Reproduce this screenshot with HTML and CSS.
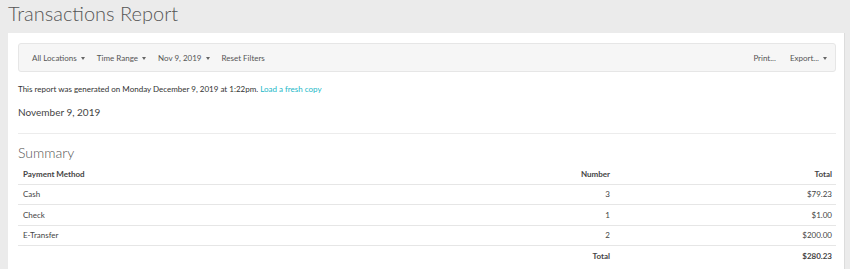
FILE: index.html
```html
<!DOCTYPE html>
<html>
<head>
<meta charset="utf-8">
<link rel="stylesheet" href="styles.css">
</head>
<body>
<h1 class="title">Transactions Report</h1>
<div class="panel">
  <div class="toolbar">
    <div class="group">
      <span class="item">All Locations <span class="caret"></span></span>
      <span class="item">Time Range <span class="caret"></span></span>
      <span class="item">Nov 9, 2019 <span class="caret"></span></span>
      <span class="item">Reset Filters</span>
    </div>
    <div class="group right">
      <span class="item">Print...</span>
      <span class="item">Export... <span class="caret"></span></span>
    </div>
  </div>
  <p class="generated">This report was generated on Monday December 9, 2019 at 1:22pm. <a class="link">Load a fresh copy</a></p>
  <h2 class="date">November 9, 2019</h2>
  <h3 class="summary">Summary</h3>
  <table class="tbl">
    <thead>
      <tr><th class="left">Payment Method</th><th class="num">Number</th><th class="num col3">Total</th></tr>
    </thead>
    <tbody>
      <tr><td>Cash</td><td class="num">3</td><td class="num">$79.23</td></tr>
      <tr><td>Check</td><td class="num">1</td><td class="num">$1.00</td></tr>
      <tr><td>E-Transfer</td><td class="num">2</td><td class="num">$200.00</td></tr>
    </tbody>
    <tfoot>
      <tr><td></td><td class="num bold">Total</td><td class="num bold">$280.23</td></tr>
    </tfoot>
  </table>
</div>
</body>
</html>
```

FILE: styles.css
```css
html, body {
  margin: 0;
  padding: 0;
  background: #ebebeb;
  font-family: Lato, "Liberation Sans", sans-serif;
  color: #444;
}
.title {
  margin: 0;
  padding: 0 0 0 8px;
  height: 33px;
  font-size: 20px;
  font-weight: 300;
  color: #555;
  line-height: 26px;
}
.panel {
  background: #fff;
  margin: 0 5px 0 8px;
  padding: 10px 8px 20px 10px;
  border-right: 1px solid #dcdcdc;
  min-height: 200px;
}
.toolbar {
  display: flex;
  justify-content: space-between;
  align-items: center;
  height: 27px;
  background: #f6f6f6;
  border: 1px solid #e6e6e6;
  border-radius: 3px;
  padding: 0 8px 0 13px;
  font-size: 8px;
  color: #555;
}
.group {
  display: flex;
  gap: 12px;
}
.group.right {
  gap: 14px;
}
.caret {
  display: inline-block;
  width: 0;
  height: 0;
  border-left: 2.5px solid transparent;
  border-right: 2.5px solid transparent;
  border-top: 3px solid #666;
  vertical-align: middle;
  margin-left: 2px;
}
.generated {
  margin: 12px 0 0;
  font-size: 8px;
  color: #333;
  line-height: 10px;
}
.link {
  color: #22b8c8;
}
.date {
  margin: 12px 0 0;
  font-size: 10px;
  font-weight: 400;
  color: #444;
  line-height: 13px;
  padding-bottom: 14px;
  border-bottom: 1px solid #ececec;
}
.summary {
  margin: 10px 0 0;
  font-size: 14px;
  font-weight: 300;
  color: #555;
  line-height: 18px;
}
.tbl {
  width: 100%;
  border-collapse: collapse;
  font-size: 8px;
  margin-top: 2px;
}
.tbl th, .tbl td {
  padding: 0 4px 0 5px;
  height: 19.5px;
  border-bottom: 1px solid #e6e6e6;
  text-align: left;
  color: #444;
}
.tbl th {
  font-weight: 700;
  color: #444;
}
.tbl .num {
  text-align: right;
}
.tbl .col3 {
  width: 213px;
}
.tbl tfoot td {
  border-bottom: none;
}
.bold {
  font-weight: 700;
}
```
